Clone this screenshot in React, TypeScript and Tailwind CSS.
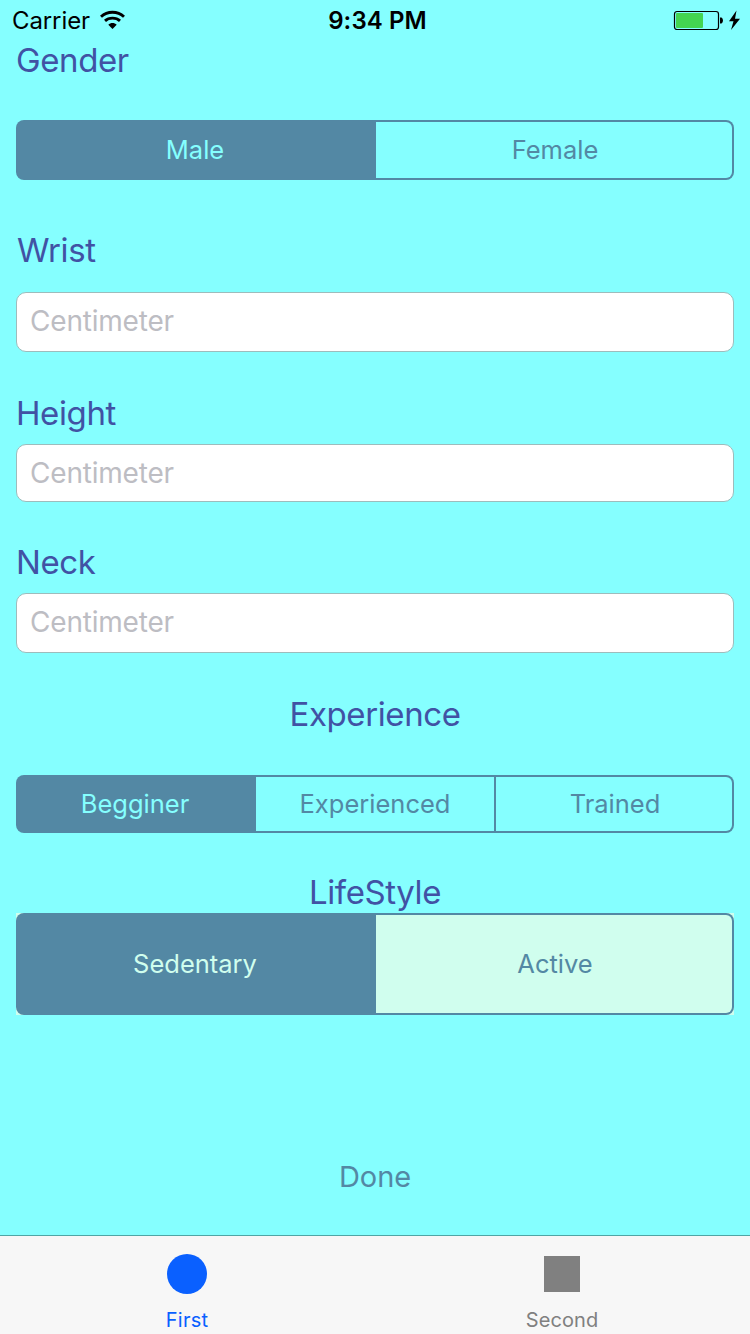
import type { ReactNode } from "react";

function StatusBar() {
  return (
    <header className="grid h-10 shrink-0 grid-cols-3 items-center pl-3 pr-2.5 text-black">
      <div className="flex items-center gap-2.5">
        <span className="pt-px text-[24px] leading-10 tracking-[-0.1px]">Carrier</span>
        <svg className="mb-0.5" width="26" height="20" viewBox="0 0 26 20" fill="none" stroke="#000">
          <path d="M1 6.700C7.500 .7 17.500 .7 24 6.700" strokeWidth="2.900" />
          <path d="M5 10.900C9 7.200 16 7.200 20 10.900" strokeWidth="2.900" />
          <path d="M12.500 19L8.300 14.700C10.500 12.400 14.500 12.400 16.700 14.700Z" fill="#000" stroke="none" />
        </svg>
      </div>
      <span className="pl-[3px] pt-px text-center text-[24px] font-semibold leading-10 tracking-[0.1px]">9:34 PM</span>
      <svg className="mb-0.5 justify-self-end" width="67" height="24" viewBox="0 0 67 24">
        <rect x="1.500" y="3.500" width="44" height="18" rx="2.500" fill="none" stroke="#000" strokeWidth="1.200" />
        <rect x="3" y="5" width="27" height="15" rx="1" fill="#43d551" />
        <path d="M47 9.500H48.500Q50 10.500 50 12.500T48.500 15.500H47Z" fill="#000" />
        <path d="M63.500 2.500L56 13.300H60.500L58 22L67 10.800H62Z" fill="#000" />
      </svg>
    </header>
  );
}

function Label({ children, className = "" }: { children: ReactNode; className?: string }) {
  return <h2 className={`h-10 text-[33px] leading-10 tracking-[-0.4px] text-[#4152a4] ${className}`}>{children}</h2>;
}

function Field({ className }: { className: string }) {
  return (
    <input
      placeholder="Centimeter"
      className={`block w-full rounded-[10px] border border-[#9dbcbc] bg-white px-[13px] text-[28px] tracking-[-0.2px] outline-none placeholder:text-[#bdbdc3] ${className}`}
    />
  );
}

function Segments({ items, className, selected }: { items: string[]; className: string; selected: string }) {
  const columns = items.length === 3 ? "grid-cols-[240px_240px_238px]" : "grid-cols-[360px_358px]";
  const shape = (i: number) => {
    if (i === 0) return `rounded-l-lg bg-[#5388a4] pr-0.5 ${selected}`;
    if (i === items.length - 1) return "rounded-r-lg border-y-2 border-r-2 border-[#5388a4] pl-0.5";
    return "border-y-2 border-r-2 border-[#5388a4]";
  };
  return (
    <div className={`grid text-[25.5px] text-[#5388a4] ${columns} ${className}`}>
      {items.map((item, i) => (
        <button key={item} className={shape(i)}>
          {item}
        </button>
      ))}
    </div>
  );
}

export default function App() {
  return (
    <div className="flex h-[1334px] w-[750px] flex-col overflow-hidden bg-[#85ffff] font-['Inter',sans-serif]">
      <StatusBar />
      <main className="flex flex-1 flex-col px-4">
        <Label>Gender</Label>
        <Segments items={["Male", "Female"]} className="mt-10 h-[60px]" selected="text-[#85ffff]" />
        <Label className="mt-[50px] pl-px">Wrist</Label>
        <Field className="mt-[22px] h-[60px] pb-0.5" />
        <Label className="mt-[41px]">Height</Label>
        <Field className="mt-[11px] h-[58px]" />
        <Label className="mt-10">Neck</Label>
        <Field className="mt-[11px] h-[60px] pb-0.5" />
        <Label className="mt-[41px] text-center">Experience</Label>
        <Segments items={["Begginer", "Experienced", "Trained"]} className="mt-[41px] h-[58px]" selected="text-[#85ffff]" />
        <Label className="mt-[39px] text-center">LifeStyle</Label>
        <div className="mt-px bg-[#d0feee]">
          <Segments items={["Sedentary", "Active"]} className="h-[102px]" selected="text-[#d0feee]" />
        </div>
        <button className="mt-[142px] h-10 self-center text-[29px] leading-10 tracking-[-0.1px] text-[#5388a4]">Done</button>
      </main>
      <nav className="flex h-[99px] shrink-0 border-t border-[#50a5a5] bg-[#f7f7f7] text-[20px] leading-6 tracking-[0.2px]">
        <button className="flex w-[374px] flex-col items-center pt-[18px] text-[#0a60ff]">
          <span className="size-10 rounded-full bg-[#0a60ff]" />
          <span className="mt-3.5">First</span>
        </button>
        <button className="flex w-[376px] flex-col items-center pt-5 text-[#808080]">
          <span className="size-9 bg-[#808080]" />
          <span className="mt-4 tracking-[0.1px]">Second</span>
        </button>
      </nav>
    </div>
  );
}
